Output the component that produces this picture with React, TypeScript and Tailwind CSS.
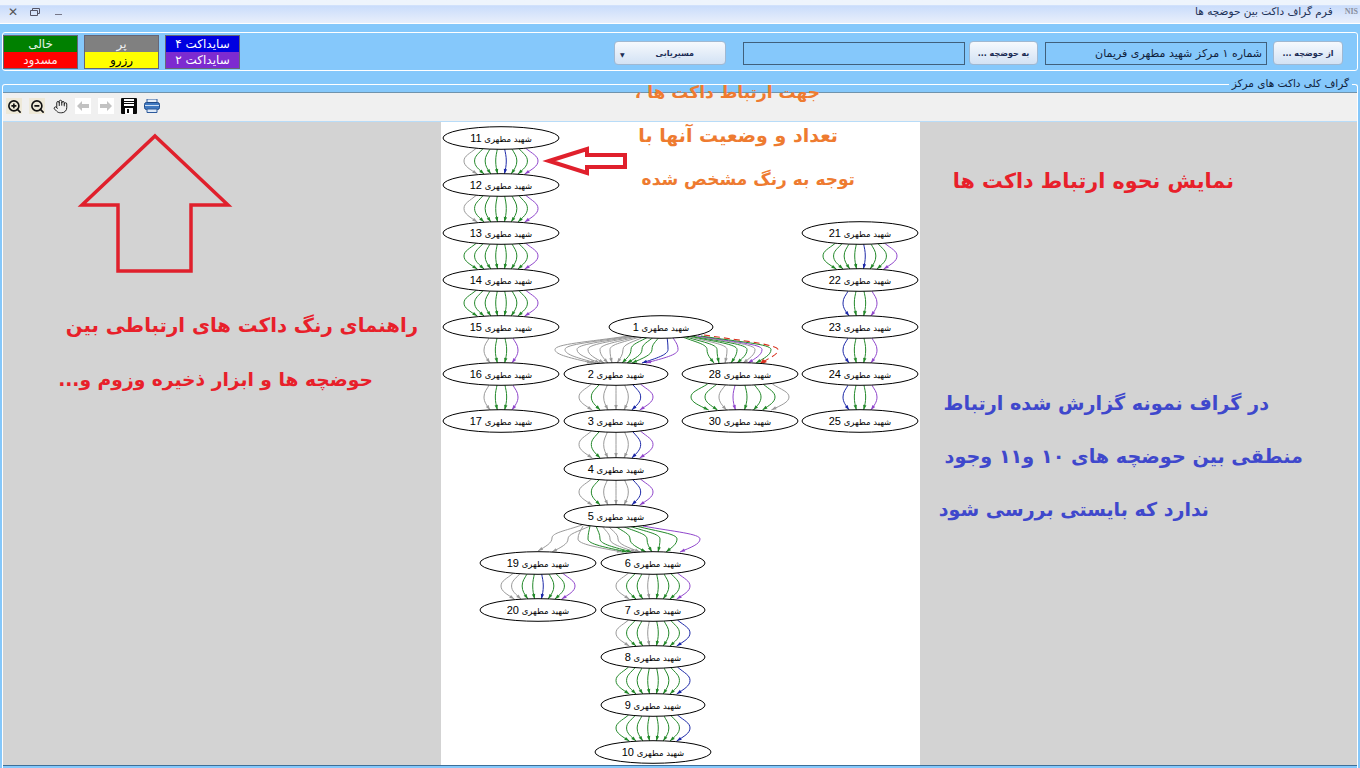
import { Hand, ZoomIn, ZoomOut } from "lucide-react";

const FONT = "font-['DejaVu_Sans',sans-serif]";

const GRAY = "#9a9a9a";
const GREEN = "#23892a";
const BLUE = "#1c28a8";
const PURPLE = "#9046cc";
const RED = "#d8301c";

type GraphNode = { id: number; cx: number; cy: number; rx: number };

const NODES: GraphNode[] = [
  { id: 11, cx: 501, cy: 138, rx: 58 },
  { id: 12, cx: 501, cy: 185, rx: 58 },
  { id: 13, cx: 501, cy: 233, rx: 58 },
  { id: 14, cx: 501, cy: 280, rx: 58 },
  { id: 15, cx: 501, cy: 327, rx: 58 },
  { id: 16, cx: 501, cy: 374, rx: 58 },
  { id: 17, cx: 501, cy: 421, rx: 58 },
  { id: 1, cx: 661, cy: 327, rx: 52 },
  { id: 2, cx: 616, cy: 374, rx: 52 },
  { id: 3, cx: 616, cy: 421, rx: 52 },
  { id: 4, cx: 616, cy: 469, rx: 52 },
  { id: 5, cx: 616, cy: 516, rx: 52 },
  { id: 28, cx: 740, cy: 374, rx: 58 },
  { id: 30, cx: 740, cy: 421, rx: 58 },
  { id: 19, cx: 538, cy: 563, rx: 58 },
  { id: 20, cx: 538, cy: 610, rx: 58 },
  { id: 6, cx: 653, cy: 563, rx: 52 },
  { id: 7, cx: 653, cy: 610, rx: 52 },
  { id: 8, cx: 653, cy: 657, rx: 52 },
  { id: 9, cx: 653, cy: 705, rx: 52 },
  { id: 10, cx: 653, cy: 752, rx: 58 },
  { id: 21, cx: 860, cy: 233, rx: 58 },
  { id: 22, cx: 860, cy: 280, rx: 58 },
  { id: 23, cx: 860, cy: 327, rx: 58 },
  { id: 24, cx: 860, cy: 374, rx: 58 },
  { id: 25, cx: 860, cy: 421, rx: 58 },
];

const WIDE_A = [GRAY, GREEN, GREEN, GREEN, BLUE, GREEN, GREEN, PURPLE];
const WIDE_B = [GRAY, GREEN, GREEN, GREEN, GREEN, GREEN, GREEN, PURPLE];
const WIDE_C = [GREEN, GREEN, GREEN, GREEN, GREEN, GREEN, GREEN, PURPLE];
const NARROW_A = [GRAY, GREEN, GREEN, PURPLE];
const NARROW_B = [BLUE, GREEN, GREEN, PURPLE];
const MID = [GRAY, GREEN, GRAY, GRAY, GRAY, BLUE, PURPLE];
const SIX = [GRAY, GREEN, GREEN, GRAY, GREEN, GREEN, GREEN, BLUE];
const LOW = [GREEN, GREEN, GREEN, GREEN, GREEN, GREEN, GREEN, BLUE];

// [center x, top y, bottom y, half width, colours]
const BUNDLES: [number, number, number, number, string[]][] = [
  [501, 149, 174, 37, WIDE_A],
  [501, 196, 222, 37, WIDE_B],
  [501, 244, 269, 37, WIDE_C],
  [501, 291, 316, 37, WIDE_C],
  [501, 338, 363, 17, NARROW_A],
  [501, 385, 410, 17, NARROW_A],
  [616, 385, 410, 37, MID],
  [616, 432, 458, 37, MID],
  [616, 480, 505, 37, MID],
  [740, 385, 410, 49, [GREEN, GREEN, GRAY, PURPLE, GREEN, GREEN, GREEN, GRAY]],
  [538, 574, 599, 37, [GRAY, GRAY, GREEN, GREEN, BLUE, GREEN, GREEN, PURPLE]],
  [653, 574, 599, 37, [GRAY, GREEN, GREEN, GRAY, GREEN, GREEN, GREEN, PURPLE]],
  [653, 621, 646, 37, SIX],
  [653, 668, 694, 37, LOW],
  [653, 716, 741, 37, LOW],
  [860, 244, 269, 37, [GREEN, GREEN, GREEN, GREEN, BLUE, GREEN, GREEN, PURPLE]],
  [860, 291, 316, 17, NARROW_B],
  [860, 338, 363, 17, NARROW_B],
  [860, 385, 410, 17, NARROW_B],
];

// fans between nodes at different x: [start x, mid x, end x, colour]
type Fan = [number, number, number, string];
const FAN_1_2: Fan[] = [
  [628, 555, 592, GRAY], [631, 565, 596, GRAY], [634, 577, 600, GRAY], [637, 588, 604, GRAY],
  [640, 600, 608, GRAY], [643, 610, 612, GRAY], [646, 623, 617, GRAY], [650, 631, 622, GREEN],
  [655, 642, 627, GREEN], [660, 652, 632, GREEN], [667, 668, 642, BLUE], [672, 678, 646, PURPLE],
];
const FAN_1_28: Fan[] = [
  [680, 707, 714, GREEN], [683, 717, 719, GREEN], [686, 727, 725, GRAY], [689, 737, 731, GREEN],
  [692, 747, 737, GREEN], [695, 755, 743, GRAY], [698, 762, 748, PURPLE], [701, 771, 756, GREEN],
];
const FAN_5_6: Fan[] = [
  [583, 578, 622, GRAY], [590, 588, 627, GREEN], [596, 600, 632, GREEN], [602, 610, 636, GRAY],
  [608, 618, 640, GRAY], [615, 630, 646, GREEN], [622, 647, 652, GREEN], [629, 660, 658, GREEN],
  [636, 677, 666, GREEN], [643, 700, 680, PURPLE],
];

function curve(x0: number, y0: number, xm: number, x1: number, y1: number, color: string, key: string) {
  const h = y1 - y0;
  const ym = y0 + h * 0.5;
  const c1 = x0 * 0.45 + xm * 0.55;
  const c4 = xm * 0.55 + x1 * 0.45;
  const p = `M${x0} ${y0}C${c1} ${y0 + h * 0.22} ${xm} ${y0 + h * 0.3} ${xm} ${ym}C${xm} ${y0 + h * 0.7} ${c4} ${y0 + h * 0.82} ${x1} ${y1}`;
  const angle = Math.atan2(h * 0.18, x1 - c4);
  const ax = x1 - Math.cos(angle) * 5;
  const ay = y1 - Math.sin(angle) * 5;
  const nx = -Math.sin(angle) * 1.7;
  const ny = Math.cos(angle) * 1.7;
  return (
    <g key={key}>
      <path d={p} fill="none" stroke={color} strokeWidth={1} />
      <polygon points={`${x1},${y1} ${ax + nx},${ay + ny} ${ax - nx},${ay - ny}`} fill={color} />
    </g>
  );
}

function Graph() {
  return (
    <svg width="479" height="643" viewBox="441 122 479 643" className="block">
      {BUNDLES.map(([cx, y0, y1, w, colors], b) =>
        colors.map((c, i) => {
          const t = (i / (colors.length - 1)) * 2 - 1;
          return curve(cx + t * w * 0.66, y0 - 1, cx + t * w, cx + t * w * 0.64, y1, c, `b${b}-${i}`);
        })
      )}
      {FAN_1_2.map(([a, m, e, c], i) => curve(a, 336, m, e, 363, c, `a${i}`))}
      {FAN_1_28.map(([a, m, e, c], i) => curve(a, 336, m, e, 363, c, `c${i}`))}
      <path d="M704 335C745 341 782 345 778 351C776 356 768 358 762 363" fill="none" stroke={RED} strokeWidth={1.1} strokeDasharray="6 4" />
      <polygon points="759,365 763,359 767,362" fill={RED} />
      {curve(582, 525, 552, 538, 551, GRAY, "e0")}
      {curve(590, 526, 568, 552, 552, GRAY, "e1")}
      {FAN_5_6.map(([a, m, e, c], i) => curve(a, 526, m, e, 552, c, `d${i}`))}
      {NODES.map((n) => (
        <g key={n.id}>
          <ellipse cx={n.cx} cy={n.cy} rx={n.rx} ry={11.3} fill="white" stroke="black" strokeWidth={1} />
          <text x={n.cx} y={n.cy + 4} textAnchor="middle" direction="rtl" fontSize={8.5} fill="black" fontFamily="'DejaVu Sans',sans-serif">
            شهید مطهری <tspan fontSize={11} fontFamily="'Liberation Sans',sans-serif">{n.id}</tspan>
          </text>
        </g>
      ))}
    </svg>
  );
}

function LegendCell({ label, className }: { label: string; className: string }) {
  return <div className={`flex h-[16px] w-[73px] items-center justify-center text-[12px] leading-none ${className}`}>{label}</div>;
}

function Legend() {
  return (
    <div className="flex gap-[6px]">
      <div className="border border-[#667]">
        <LegendCell label="خالی" className="bg-[#008000] text-[#e8f4e8]" />
        <LegendCell label="مسدود" className="bg-[#ff0000] text-[#ffe8e8]" />
      </div>
      <div className="border border-[#667]">
        <LegendCell label="پر" className="bg-[#808080] text-[#f0f0f0]" />
        <LegendCell label="رزرو" className="bg-[#ffff00] text-black" />
      </div>
      <div className="border border-[#667]">
        <LegendCell label="سایداکت ۴" className="bg-[#0000e0] text-white" />
        <LegendCell label="سایداکت ۲" className="bg-[#7d2bd0] text-white" />
      </div>
    </div>
  );
}

function PillButton({ label, width }: { label: string; width: string }) {
  return (
    <div dir="rtl" className={`flex h-[24px] ${width} items-center justify-center rounded-[4px] border border-[#9fb8d2] bg-gradient-to-b from-[#f6f9fd] to-[#d3e2f4] pt-[2px] text-[8px] font-bold text-[#1c2c55]`}>
      {label}
    </div>
  );
}

function FieldBox({ children }: { children?: string }) {
  return (
    <div dir="rtl" className="flex h-[23px] w-[222px] items-center border border-[#40607c] bg-[#85c8fb] pr-[4px] pt-[2px] text-[11px] text-[#10223c]">
      {children}
    </div>
  );
}

function GraphToolbar() {
  return (
    <div className="flex h-[29px] items-center gap-[7px] border-b border-[#b8dcf8] bg-[#f0f0f0] pb-[2px] pl-[3px]">
      <span className="grid h-[16px] w-[16px] place-items-center bg-[#eee9d8]"><ZoomIn size={15} strokeWidth={2.6} color="#111" /></span>
      <span className="grid h-[16px] w-[16px] place-items-center bg-[#eee9d8]"><ZoomOut size={15} strokeWidth={2.6} color="#111" /></span>
      <span className="grid h-[16px] w-[16px] place-items-center"><Hand size={15} strokeWidth={1.6} color="#222" /></span>
      <span className="grid h-[16px] w-[16px] place-items-center bg-white">
        <svg width="12" height="10" viewBox="0 0 12 10"><path d="M0 5l5-5v3h7v4H5v3z" fill="#c2c2c2" /></svg>
      </span>
      <span className="grid h-[16px] w-[16px] place-items-center bg-white">
        <svg width="12" height="10" viewBox="0 0 12 10"><path d="M12 5L7 0v3H0v4h7v3z" fill="#c2c2c2" /></svg>
      </span>
      <svg width="16" height="16" viewBox="0 0 16 16">
        <path d="M0 1a1 1 0 011-1h14a1 1 0 011 1v14a1 1 0 01-1 1H1a1 1 0 01-1-1z" fill="#0a0a0a" />
        <path d="M3 1h10v2H3zM3 4h10v1H3zM3 6h10v2H3z" fill="#fff" />
        <path d="M4 10h8v6H4z" fill="#fff" />
        <path d="M6 11h2v4H6z" fill="#0a0a0a" />
      </svg>
      <svg width="16" height="14" viewBox="0 0 16 14">
        <path d="M3 0h10v4H3z" fill="#e8eef6" stroke="#2c5a9c" strokeWidth="1" />
        <rect x="0.5" y="3.5" width="15" height="7" rx="2" fill="#3f78c0" stroke="#1f4a88" />
        <path d="M1 6.5h14" stroke="#cfe0f4" strokeWidth="1" />
        <path d="M3 10h10v3.5H3z" fill="#dce8f6" stroke="#2c5a9c" strokeWidth="1" />
      </svg>
    </div>
  );
}

const NOTES: { text: string; className: string }[] = [
  { text: "جهت ارتباط داکت ها ،", className: "right-[540px] top-[77px] text-[17px] text-[#ee7b30]" },
  { text: "تعداد و وضعیت آنها با", className: "right-[522px] top-[120px] text-[19px] text-[#ee7b30]" },
  { text: "توجه به رنگ مشخص شده", className: "right-[505px] top-[164px] text-[17px] text-[#ee7b30]" },
  { text: "نمایش نحوه ارتباط داکت ها", className: "right-[126px] top-[166px] text-[20.7px] text-[#e8202a]" },
  { text: "راهنمای رنگ داکت های ارتباطی بین", className: "right-[942px] top-[311px] text-[19.700px] text-[#e8202a]" },
  { text: "حوضچه ها و ابزار ذخیره وزوم و...", className: "right-[987px] top-[365px] text-[18.700px] text-[#e8202a]" },
  { text: "در گراف نمونه گزارش شده ارتباط", className: "right-[91px] top-[389px] text-[19.200px] text-[#3f48cc]" },
  { text: "منطقی بین حوضچه های ۱۰ و۱۱ وجود", className: "right-[57px] top-[442px] text-[19.200px] text-[#3f48cc]" },
  { text: "ندارد که بایستی بررسی شود", className: "right-[151px] top-[494px] text-[19px] text-[#3f48cc]" },
];

export default function App() {
  return (
    <div dir="ltr" className={`relative h-[768px] w-[1360px] overflow-hidden bg-[#85c8fb] ${FONT}`}>
      {/* title bar */}
      <div className="flex h-[24px] items-center justify-between border-b border-white bg-gradient-to-b from-[#eef4fc] from-20% via-[#c9dcfb] via-25% to-[#e9effb] pr-[2px]">
        <div className="flex items-center gap-[12px] pl-[8px] text-[#555]">
          <span className="text-[12px] font-bold leading-none">✕</span>
          <svg width="10" height="8" viewBox="0 0 10 8"><path d="M0.5 2.5h7v5h-7zM2.5 2.500V.5h7v5h-2" fill="none" stroke="#556" /></svg>
          <span className="ml-[3px] mt-[6px] h-[1px] w-[7px] bg-[#778]" />
        </div>
        <div className="flex items-center gap-[12px] pt-[1px] text-[10.5px] text-[#1f3358]">
          <span>فرم گراف داکت بین حوضچه ها</span>
          <span className="font-['Liberation_Serif',serif] text-[8px] font-bold text-[#8a90a0]">NIS</span>
        </div>
      </div>

      {/* filter strip */}
      <div className="mx-[2px] mt-[8px] flex h-[39px] items-center justify-between rounded-[3px] border border-white pr-[14px]">
        <Legend />
        <div className="mt-[3px] flex items-center">
          <div className="mr-[17px] flex h-[24px] w-[112px] items-center rounded-[4px] border border-[#9fb8d2] bg-gradient-to-b from-[#f6f9fd] to-[#d3e2f4] pt-[2px] text-[8px] font-bold text-[#1c2c55]">
            <span className="ml-[5px] text-[6px]">▼</span>
            <span className="flex-1 text-center">مسیریابی</span>
          </div>
          <FieldBox />
          <div className="ml-[4px] mr-[7px]"><PillButton label="به حوضچه ..." width="w-[69px]" /></div>
          <FieldBox>شماره ۱ مرکز شهید مطهری فریمان</FieldBox>
          <div className="ml-[6px]"><PillButton label="از حوضچه ..." width="w-[70px]" /></div>
        </div>
      </div>

      {/* group box */}
      <div className="relative mx-[2px] mt-[13px] h-[693px] rounded-t-[3px] border-x border-t border-white">
        <div className="absolute right-[5px] top-[-9px] bg-[#85c8fb] px-[3px] text-[10.5px] leading-[15px] text-[#10223c]">
          گراف کلی داکت های مرکز
        </div>
        <div className="mt-[7px] border-t border-[#6f93ad]">
          <GraphToolbar />
          <div className="flex h-[643px] justify-center bg-[#d3d3d3]">
            <div className="ml-[1px] bg-white"><Graph /></div>
          </div>
          <div className="h-[1px] bg-[#3d6f98]" />
        </div>
      </div>

      {/* notes pasted over the screenshot */}
      {NOTES.map((n) => (
        <div key={n.text} dir="rtl" className={`absolute whitespace-nowrap font-bold leading-[30px] ${n.className}`}>
          {n.text}
        </div>
      ))}

      {/* red arrows drawn on the picture */}
      <svg className="absolute left-0 top-0 pointer-events-none" width="1360" height="768">
        <path d="M155 136L228 205H191V271H118V205H82z" fill="none" stroke="#e0202c" strokeWidth="3.500" />
        <path d="M549 161L587 149V155H625V167H587V173z" fill="none" stroke="#e0202c" strokeWidth="4" />
      </svg>
    </div>
  );
}
